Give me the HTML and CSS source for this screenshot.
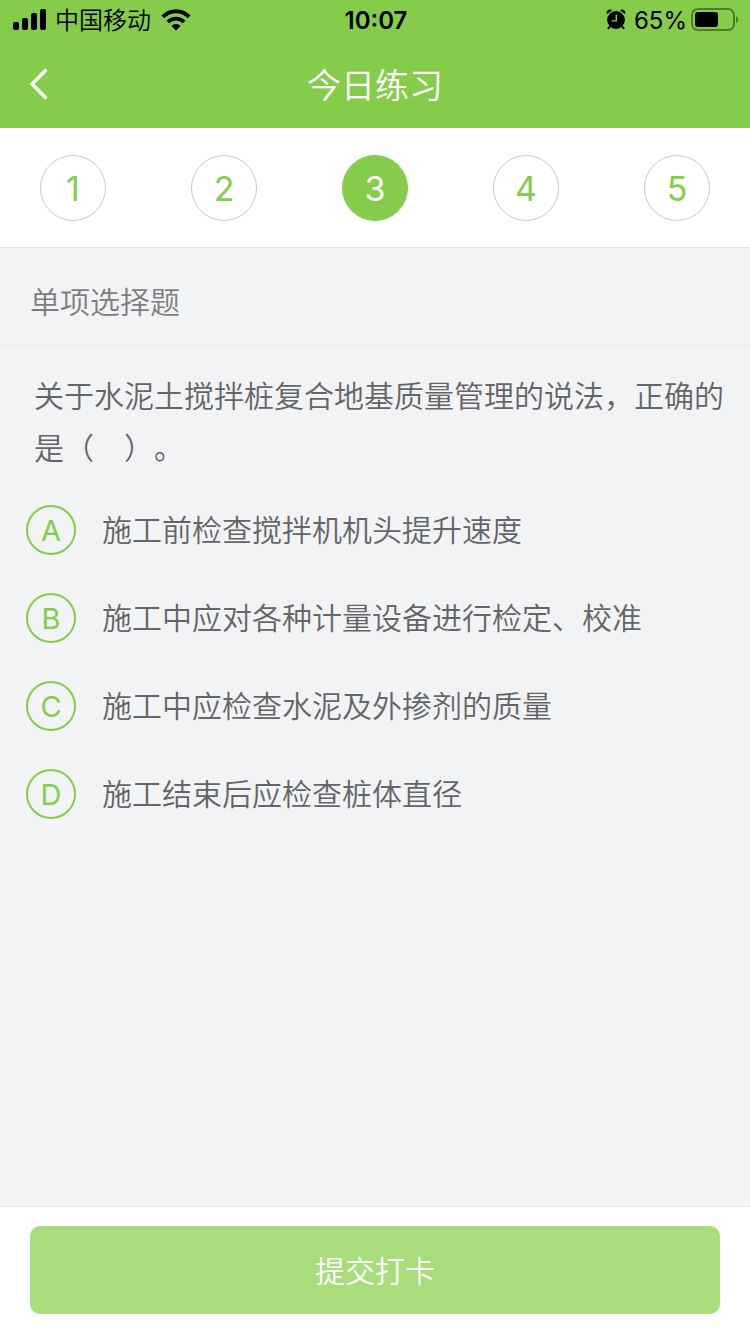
FILE: index.html
```
<!DOCTYPE html>
<html lang="zh-CN">
<head>
  <meta charset="UTF-8" />
  <meta name="viewport" content="width=device-width, initial-scale=1.0" />
  <title>今日练习</title>
  <link rel="stylesheet" href="styles.css">
</head>
<body>
  <header class="header">
    <div class="status-bar">
      <div class="status-left">
        <svg width="34" height="22" viewBox="0 0 34 22" aria-hidden="true">
          <rect x="0" y="13" width="6" height="8" rx="2" />
          <rect x="9" y="9" width="6" height="12" rx="2" />
          <rect x="18" y="4" width="6" height="17" rx="2" />
          <rect x="27" y="0" width="6" height="21" rx="2" />
        </svg>
        <span class="carrier">中国移动</span>
        <svg width="30" height="22" viewBox="0 0 30 22" aria-hidden="true">
          <path d="M15 21.5 10.4 17a6.5 6.5 0 0 1 9.2 0Z" />
          <path d="M1.9 7.8a18.5 18.5 0 0 1 26.2 0" fill="none" stroke="#000" stroke-width="4" />
          <path d="M6.9 13a11.5 11.5 0 0 1 16.2 0" fill="none" stroke="#000" stroke-width="3.8" />
        </svg>
      </div>
      <time class="clock">10:07</time>
      <div class="status-right">
        <svg width="20" height="22" viewBox="0 0 20 22" aria-hidden="true">
          <circle cx="10" cy="11" r="8.9" />
          <path d="M3.8 17.5 1.8 20M16.2 17.5l2 2.5" stroke="#000" stroke-width="2" />
          <path d="M.8 5.2C-.2 2 3-.6 6.2 1.2ZM19.2 5.2C20.2 2 17-.6 13.8 1.2Z" />
          <path d="M10.3 5.5v6.4H5.5" fill="none" stroke="#86cc4b" stroke-width="1.4" />
        </svg>
        <span class="percent">65%</span>
        <svg width="48" height="24" viewBox="0 0 48 24" aria-hidden="true">
          <rect x="1" y="1" width="42" height="21" rx="6" fill="none" stroke="#4f7f25" stroke-width="2" />
          <rect x="4" y="4" width="23" height="15" rx="3" />
          <path d="M45 8c3 1 3 6 0 7Z" fill="#4f7f25" />
        </svg>
      </div>
    </div>
    <nav class="nav-bar">
      <button type="button" class="back" aria-label="返回">
        <svg width="20" height="32" viewBox="0 0 20 32" aria-hidden="true">
          <path d="M16.5 2.5 3 16l13.5 13.5" fill="none" stroke="#fff" stroke-width="3.4" stroke-linecap="round" />
        </svg>
      </button>
      <h1 class="title">今日练习</h1>
    </nav>
  </header>

  <nav class="steps">
    <button type="button" class="step">1</button>
    <button type="button" class="step">2</button>
    <button type="button" class="step active">3</button>
    <button type="button" class="step">4</button>
    <button type="button" class="step">5</button>
  </nav>

  <main class="content">
    <h2 class="question-type">单项选择题</h2>
    <form id="answer" class="question">
      <p class="question-text" id="question">关于水泥土搅拌桩复合地基质量管理的说法，正确的是（&#12288;）。</p>
      <div class="options" role="radiogroup" aria-labelledby="question">
        <label class="option">
          <span class="mark"><input type="radio" name="answer" value="A" /><span class="letter">A</span></span>
          <span>施工前检查搅拌机机头提升速度</span>
        </label>
        <label class="option">
          <span class="mark"><input type="radio" name="answer" value="B" /><span class="letter">B</span></span>
          <span>施工中应对各种计量设备进行检定、校准</span>
        </label>
        <label class="option">
          <span class="mark"><input type="radio" name="answer" value="C" /><span class="letter">C</span></span>
          <span>施工中应检查水泥及外掺剂的质量</span>
        </label>
        <label class="option">
          <span class="mark"><input type="radio" name="answer" value="D" /><span class="letter">D</span></span>
          <span>施工结束后应检查桩体直径</span>
        </label>
      </div>
    </form>
  </main>

  <footer class="footer">
    <button type="submit" form="answer" class="submit">提交打卡</button>
  </footer>
</body>
</html>
```

FILE: styles.css
```
* {
  box-sizing: border-box;
}

body {
  display: flex;
  flex-direction: column;
  min-height: 100vh;
  margin: 0;
  background-color: #f2f3f5;
  color: #646566;
  font-family: Inter, "Noto Sans CJK SC", sans-serif;
  font-size: 30px;
  font-weight: 350;
  text-spacing-trim: space-all;
}

button {
  padding: 0;
  border: none;
  background: none;
  font-family: inherit;
  cursor: pointer;
}

svg {
  display: block;
}

/* header */
.header {
  background-color: #86cc4b;
}

.status-bar {
  display: grid;
  grid-template-columns: 1fr auto 1fr;
  align-items: center;
  height: 40px;
  padding: 0 11px 0 13px;
  color: #000;
  font-size: 24px;
  font-weight: 400;
  line-height: 38px;
}

.status-left, .status-right {
  display: flex;
  align-items: center;
}

.status-left {
  gap: 8px;
}

.carrier {
  margin-right: 2px;
  padding-top: 2px;
  font-weight: 350;
}

.clock {
  padding-top: 2px;
  font-weight: 600;
}

.status-right {
  justify-content: flex-end;
  gap: 4px;
}

.percent {
  margin-left: 4px;
  padding-top: 2px;
}

.nav-bar {
  display: grid;
  grid-template-columns: 60px 1fr 60px;
  align-items: center;
  height: 88px;
}

.back {
  padding-left: 29px;
}

.title {
  margin: 0;
  padding-top: 4px;
  color: #fff;
  font-size: 34px;
  font-weight: 350;
  line-height: 48px;
  text-align: center;
}

/* question numbers */
.steps {
  display: flex;
  justify-content: space-between;
  padding: 27px 40px 26px;
  border-bottom: 1px solid #e6e6e6;
  background-color: #fff;
}

.step {
  width: 66px;
  height: 66px;
  border: 1px solid #c8c9cc;
  border-radius: 50%;
  color: #86cc4b;
  font-size: 34px;
}

.step.active {
  border-color: #86cc4b;
  background-color: #86cc4b;
  color: #fff;
}

/* question */
.content {
  flex: 1;
}

.question-type {
  margin: 0;
  padding: 30px 30px 19px;
  border-bottom: 1px solid #e9eaec;
  color: #7d7e80;
  font-size: 30px;
  font-weight: 350;
  line-height: 48px;
}

.question {
  padding: 24px 26px;
}

.question-text {
  margin: 0 0 31px;
  padding-left: 8px;
  line-height: 52px;
}

.options {
  display: flex;
  flex-direction: column;
  gap: 38px;
}

.option {
  display: flex;
  align-items: center;
  gap: 26px;
  line-height: 50px;
}

.mark {
  display: grid;
  flex: none;
}

.mark input, .letter {
  grid-area: 1 / 1;
}

.mark input {
  appearance: none;
  width: 50px;
  height: 50px;
  margin: 0;
  border: 2px solid #86cc4b;
  border-radius: 50%;
}

.letter {
  padding-top: 1px;
  color: #86cc4b;
  font-size: 29px;
  font-weight: 400;
  line-height: 49px;
  text-align: center;
}

.mark input:checked {
  background-color: #86cc4b;
}

.mark input:checked + .letter {
  color: #fff;
}

/* footer */
.footer {
  padding: 19px 30px 20px;
  border-top: 1px solid #e6e6e6;
  background-color: #fff;
}

.submit {
  width: 100%;
  height: 88px;
  padding-bottom: 2px;
  border-radius: 10px;
  background-color: #a9dc7a;
  color: #fff;
  font-size: 30px;
  font-weight: 350;
}
```
